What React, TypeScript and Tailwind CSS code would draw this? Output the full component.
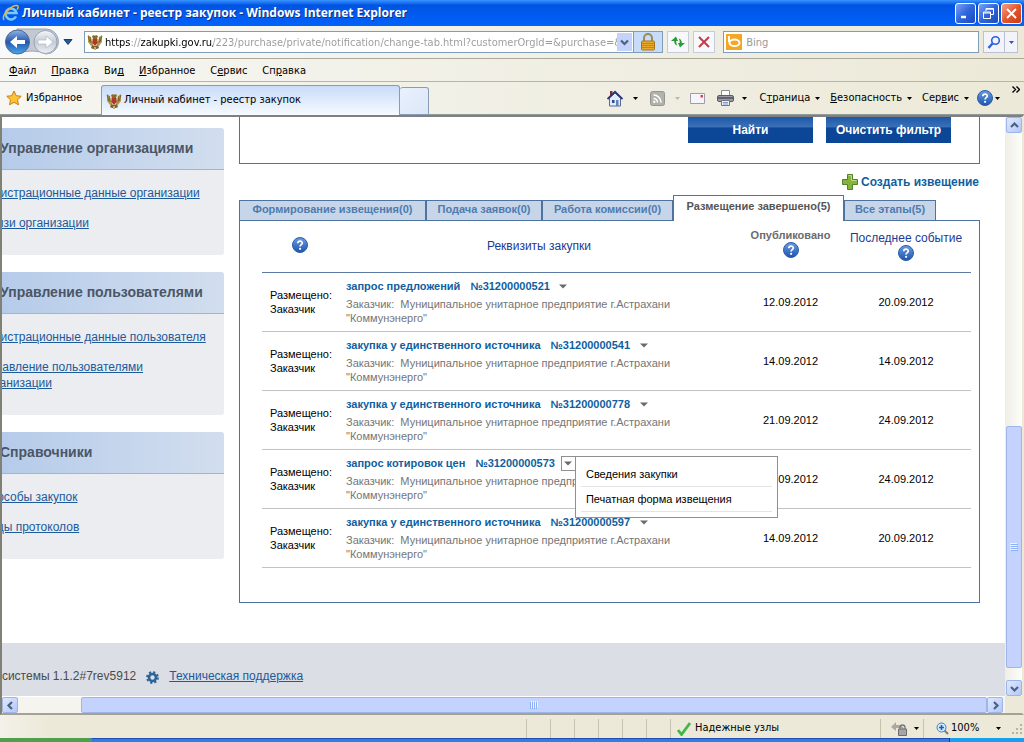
import React, { useState } from "react";
import clsx from "clsx";

const MENU = [
  ["", "Ф", "айл"],
  ["", "П", "равка"],
  ["Ви", "д", ""],
  ["", "И", "збранное"],
  ["С", "е", "рвис"],
  ["Сп", "р", "авка"],
];

const SIDEBAR = [
  {
    title: "Управление организациями",
    links: ["Регистрационные данные организации", "Связи организации"],
  },
  {
    title: "Управление пользователями",
    links: [
      "Регистрационные данные пользователя",
      "Управление пользователями организации",
    ],
  },
  { title: "Справочники", links: ["Способы закупок", "Виды протоколов"] },
];

const TABS = [
  { label: "Формирование извещения(0)", width: "w-[187px]" },
  { label: "Подача заявок(0)", width: "w-[116px]" },
  { label: "Работа комиссии(0)", width: "w-[131px]" },
  { label: "Размещение завершено(5)", width: "w-[171px]" },
  { label: "Все этапы(5)", width: "w-[92px]" },
];

const ROWS = [
  { kind: "запрос предложений", num: "№31200000521", published: "12.09.2012", last: "20.09.2012" },
  { kind: "закупка у единственного источника", num: "№31200000541", published: "14.09.2012", last: "14.09.2012" },
  { kind: "закупка у единственного источника", num: "№31200000778", published: "21.09.2012", last: "24.09.2012" },
  { kind: "запрос котировок цен", num: "№31200000573", published: "21.09.2012", last: "24.09.2012" },
  { kind: "закупка у единственного источника", num: "№31200000597", published: "14.09.2012", last: "20.09.2012" },
];

const Caret = ({ className = "" }) => (
  <svg width="5" height="3" viewBox="0 0 5 3" className={clsx("shrink-0", className)}>
    <path d="M0 0h5L2.5 3z" fill="currentColor" />
  </svg>
);

const Eagle = () => (
  <svg width="16" height="16" viewBox="0 0 16 16" className="shrink-0">
    <path d="M1 1l3 2 1 4 2 1-1 3-2 1-3-4zM15 1l-3 2-1 4-2 1 1 3 2 1 3-4z" fill="#b29a4c" />
    <path d="M1 2l2 6M3 3l1 6M15 2l-2 6M13 3l-1 6" stroke="#6c5a26" strokeWidth=".8" />
    <path d="M5 2l2-1 1 1 1-1 2 1-1 3H6z" fill="#8a6d23" />
    <path d="M5.500 5h5v4L8 12l-2.500-3z" fill="#b5352a" />
    <path d="M5 11l3 1 3-1 1 3-2 1H6l-2-1z" fill="#7a6531" />
    <path d="M7 13h2v3H7z" fill="#c9b068" />
  </svg>
);

const HelpIcon = () => (
  <svg width="16" height="16" viewBox="0 0 16 16" className="block">
    <defs>
      <linearGradient id="help" x1="0" y1="0" x2="0" y2="1">
        <stop offset="0" stopColor="#6c9de0" />
        <stop offset="1" stopColor="#1c54b0" />
      </linearGradient>
    </defs>
    <circle cx="8" cy="8" r="7.500" fill="url(#help)" stroke="#2a5da8" />
    <path d="M5.800 6.300C5.800 3.400 10.400 3.500 10.300 6.100 10.200 7.700 8.100 7.700 8.100 9.500" fill="none" stroke="#fff" strokeWidth="1.700" />
    <circle cx="8.100" cy="11.800" r="1.100" fill="#fff" />
  </svg>
);

const Chevron = ({ d }: { d: string }) => (
  <svg width="9" height="9" viewBox="0 0 9 9">
    <path d={d} fill="none" stroke="#4d6185" strokeWidth="2.200" />
  </svg>
);

const ScrollButton = ({ label, d }: { label: string; d: string }) => (
  <button
    aria-label={label}
    className="flex size-4 shrink-0 items-center justify-center rounded-xs border border-[#9fb5e8] bg-linear-to-br from-[#dfe8ff] to-[#b3c8f8]"
  >
    <Chevron d={d} />
  </button>
);

const WindowButton = ({ label, close, children }: { label: string; close?: boolean; children: React.ReactNode }) => (
  <button
    aria-label={label}
    className={clsx(
      "flex size-[21px] items-center justify-center rounded-[3px] border border-white",
      close
        ? "bg-linear-to-br from-[#f0a088] via-[#e2552d] to-[#c83c14]"
        : "bg-linear-to-br from-[#7ba2f5] via-[#2f65dc] to-[#1c49c0]"
    )}
  >
    <svg width="15" height="15" viewBox="0 0 15 15" fill="none" stroke="#fff">
      {children}
    </svg>
  </button>
);

const TitleBar = () => (
  <div className="flex h-[26px] shrink-0 items-center bg-linear-to-b from-[#3a93ff] via-[#0054e3] via-20% to-[#0262fb] pr-0.5 pl-0.5">
    <svg width="18" height="18" viewBox="0 0 18 18" fill="none" className="shrink-0">
      <path d="M14 12.500A5.500 5.500 0 1 1 14.500 9H5" stroke="#7cc8fa" strokeWidth="2.600" />
      <path d="M2 16C-1 12 9 1 15 1.500c2 .5 1 3 0 4" stroke="#e8b53c" strokeWidth="1.500" />
    </svg>
    <h1 className="ml-0.5 flex-1 font-['Open_Sans','Noto_Sans',sans-serif] text-[12px] font-bold whitespace-nowrap text-white [text-shadow:1px_1px_#0f2f8a]">
      Личный кабинет - реестр закупок - Windows Internet Explorer
    </h1>
    <div className="flex gap-0.5">
      <WindowButton label="Свернуть">
        <path d="M3 11h5" strokeWidth="2.500" />
      </WindowButton>
      <WindowButton label="Восстановить">
        <path d="M5 5V2.500h7.500v6H10M2.500 6h7v6.500h-7zM2.500 7h7M5 3.200h7.500" />
      </WindowButton>
      <WindowButton label="Закрыть" close>
        <path d="M3 3l9 9M12 3l-9 9" strokeWidth="2" />
      </WindowButton>
    </div>
  </div>
);

const NavBar = () => (
  <div className="flex h-[33px] shrink-0 items-center border-b border-[#aca899] bg-linear-to-r from-[#f8f9fa] to-[#ece9d8] pr-1.5 pl-1">
    <svg width="56" height="28" viewBox="0 0 56 28" className="shrink-0">
      <defs>
        <linearGradient id="back" x1="0" y1="0" x2="0" y2="1">
          <stop offset="0" stopColor="#8fb4e4" />
          <stop offset=".5" stopColor="#2358b0" />
          <stop offset="1" stopColor="#4aa6ea" />
        </linearGradient>
        <linearGradient id="fwd" x1="0" y1="0" x2="0" y2="1">
          <stop offset="0" stopColor="#f5f7fa" />
          <stop offset=".5" stopColor="#c4cbd5" />
          <stop offset="1" stopColor="#eef1f5" />
        </linearGradient>
      </defs>
      <path d="M13 1h29a12 12 0 0 1 0 25q-6-3-14-3t-15 3z" fill="#c2c9d3" stroke="#9aa5b5" />
      <circle cx="13.500" cy="14" r="12" fill="url(#back)" stroke="#50698f" />
      <circle cx="41.500" cy="14" r="11.500" fill="url(#fwd)" stroke="#98a3b3" />
      <path d="M6 14l7-6v4h8v4h-8v4z" fill="#fff" />
      <path d="M49 14l-7-6v4h-8v4h8v4z" fill="#fff" stroke="#b3bac5" strokeWidth=".7" />
    </svg>
    <button aria-label="Последние страницы" className="ml-0.5 p-px text-[#1f5d96]">
      <svg width="10" height="6" viewBox="0 0 10 6">
        <path d="M1 .5h8L5 5.500z" fill="currentColor" stroke="#173f6a" />
      </svg>
    </button>
    <div className="ml-2.5 flex h-[22px] min-w-0 flex-[580] items-center border border-[#7f9db9] bg-white pl-0.5">
      <Eagle />
      <input
        aria-label="Адрес"
        readOnly
        className="ml-0.5 min-w-0 flex-1 bg-[linear-gradient(90deg,#000_26px,#999_26px,#999_36px,#000_36px,#000_108px,#999_108px)] bg-clip-text pt-0.5 text-transparent outline-none"
        value="https://zakupki.gov.ru/223/purchase/private/notification/change-tab.html?customerOrgId=&purchase=&"
      />
      <button aria-label="Показать адреса" className="mr-px flex h-[18px] w-[15px] items-center justify-center bg-[#c3d3fb]">
        <Chevron d="M1 2.500l3.500 3.500 3.500-3.500" />
      </button>
      <button aria-label="Отчет о безопасности" className="flex h-5 w-[29px] items-center justify-center border-l border-[#7f9db9] bg-[#c6dcf8]">
        <svg width="16" height="18" viewBox="0 0 16 18">
          <path d="M4 9V5a4 4 0 0 1 8 0v4" fill="none" stroke="#9b8a5b" strokeWidth="2" />
          <rect x="1.500" y="8" width="13" height="9" rx="1" fill="#e8a92c" stroke="#a9751c" />
          <path d="M2 10.500h12M2 12.500h12M2 14.500h12" stroke="#c58518" />
        </svg>
      </button>
    </div>
    <button aria-label="Обновить" className="ml-1 flex h-[22px] w-[22px] items-center justify-center border border-[#c5ccda] bg-[#f7f8fb]">
      <svg width="16" height="16" viewBox="0 0 16 16" fill="#2d9a36">
        <path d="M6 2.500L1 7h3.200c0 2.500 1 4 3.300 4.500C6.300 10 6.200 8.800 6.300 7H8zM10 13.500L15 9h-3.200c0-2.500-1-4-3.300-4.500C9.700 6 9.800 7.200 9.700 9H8z" />
      </svg>
    </button>
    <button aria-label="Остановить" className="ml-1 flex h-[22px] w-[22px] items-center justify-center border border-[#c5ccda] bg-[#f7f8fb]">
      <svg width="14" height="14" viewBox="0 0 14 14">
        <path d="M2 2l10 10M12 2L2 12" stroke="#c33c46" strokeWidth="2" />
      </svg>
    </button>
    <div className="ml-2 flex h-[22px] min-w-0 flex-[254] items-center border border-[#7f9db9] bg-white pl-0.5">
      <svg width="16" height="16" viewBox="0 0 16 16" className="shrink-0">
        <path d="M0 0h16v16H0z" fill="#f5a623" />
        <path d="M3 2v6" stroke="#fff" strokeWidth="2" />
        <ellipse cx="8.500" cy="8.800" rx="5" ry="3.300" fill="none" stroke="#fff" strokeWidth="2" />
      </svg>
      <input aria-label="Поиск" placeholder="Bing" className="ml-1 min-w-0 flex-1 pt-0.5 outline-none placeholder:text-[#999]" />
    </div>
    <div className="ml-1 flex h-[22px] border border-[#b9c2d4] bg-[#f2f4fa]">
      <button aria-label="Найти в Bing" className="flex w-[21px] items-center justify-center border-r border-[#b9c2d4]">
        <svg width="14" height="14" viewBox="0 0 14 14" fill="none" stroke="#2b62d9">
          <circle cx="8.500" cy="5.500" r="3.800" strokeWidth="1.600" />
          <path d="M5.500 8.500L1.500 13" strokeWidth="2.400" />
        </svg>
      </button>
      <button aria-label="Параметры поиска" className="flex w-3 items-center justify-center text-[#2b55b9]">
        <Caret />
      </button>
    </div>
  </div>
);

const MenuBar = () => (
  <nav className="flex h-[23px] shrink-0 items-center gap-[15px] border-b border-[#b8b5a3] bg-linear-to-r from-[#f6f6f2] to-[#ece9d8] px-[9px] pt-[3px]">
    {MENU.map(([before, key, after]) => (
      <button key={before + key + after}>
        {before}
        <u>{key}</u>
        {after}
      </button>
    ))}
  </nav>
);

const CommandBar = () => (
  <div className="flex h-[33px] shrink-0 bg-linear-to-r from-[#f6f6f2] to-[#ece9d8]">
    <button className="flex w-[101px] items-center gap-1 border-b border-[#919b9c] pl-1.5">
      <svg width="16" height="16" viewBox="0 0 16 16">
        <path d="M8 1l2.200 4.700 5 .6-3.700 3.500 1 5L8 12.300l-4.500 2.500 1-5L.8 6.300l5-.6z" fill="#fcc436" stroke="#c77f18" />
      </svg>
      Избранное
    </button>
    <div className="mt-[3px] flex w-[299px] items-center rounded-t-[3px] border border-b-0 border-[#8a9bb5] bg-linear-to-b from-[#c8dcf8] to-[#f7faff] pl-1">
      <Eagle />
      <span className="ml-0.5 whitespace-nowrap">Личный кабинет - реестр закупок</span>
    </div>
    <button aria-label="Новая вкладка" className="mt-[5px] w-[29px] rounded-t-[3px] border border-l-0 border-[#8a9bb5] bg-linear-to-br from-[#e9f1fd] to-[#dbe7f8]" />
    <div className="flex flex-1 items-center justify-end border-b border-[#919b9c] pr-1 whitespace-nowrap">
      <button aria-label="Домой">
        <svg width="16" height="17" viewBox="0 0 16 17">
          <path d="M3 1h2.500v5H3z" fill="#8a2a2a" />
          <path d="M2.500 8L8 3l5.500 5v8h-11z" fill="#e4edfb" stroke="#5b6b8f" />
          <path d="M.5 9L8 1.800 15.500 9" fill="none" stroke="#27357e" strokeWidth="1.800" />
          <path d="M5 10h2.500v3H5z" fill="#2c4a9c" />
          <path d="M9 10h2.500v6H9z" fill="#5d83c5" />
        </svg>
      </button>
      <Caret className="ml-2.5" />
      <button aria-label="Веб-каналы" className="ml-3">
        <svg width="15" height="15" viewBox="0 0 15 15" fill="none">
          <rect x=".5" y=".5" width="14" height="14" rx="2" fill="#b2b2ac" stroke="#95958f" />
          <path d="M3.500 7.500a4 4 0 0 1 4 4M3.500 4a7.500 7.500 0 0 1 7.500 7.500" stroke="#fff" strokeWidth="1.600" />
          <circle cx="4.300" cy="10.800" r="1.200" fill="#fff" />
        </svg>
      </button>
      <Caret className="ml-2.5 text-[#bbb8a8]" />
      <button aria-label="Прочитать почту" className="ml-2.5">
        <svg width="15" height="11" viewBox="0 0 15 11">
          <path d="M.5.500h14v10H.5z" fill="#f5f5fa" stroke="#9c9cae" />
          <path d="M10.500 2h2.500v2.500h-2.500z" fill="#d0455a" />
        </svg>
      </button>
      <button aria-label="Печать" className="ml-3">
        <svg width="17" height="16" viewBox="0 0 17 16">
          <path d="M4.500.5h8v6h-8z" fill="#fff" stroke="#8b8b95" />
          <rect x=".5" y="5.500" width="16" height="6" rx="1.500" fill="#9b9ba5" stroke="#5d5d68" />
          <path d="M1 8h15" stroke="#4f4f5c" strokeWidth="1.500" />
          <path d="M4.500 10.500h8v5h-8z" fill="#e9f0fa" stroke="#76767f" />
          <path d="M6 12.500h5M6 14h5" stroke="#6b8cc4" strokeWidth=".8" />
        </svg>
      </button>
      <Caret className="ml-2" />
      <button className="ml-3 flex items-center gap-[5px]">
        <span>С<u>т</u>раница</span>
        <Caret />
      </button>
      <button className="ml-2.5 flex items-center gap-[5px]">
        <span><u>Б</u>езопасность</span>
        <Caret />
      </button>
      <button className="ml-2.5 flex items-center gap-[5px]">
        <span>Сер<u>в</u>ис</span>
        <Caret />
      </button>
      <button aria-label="Справка" className="ml-2 flex items-center gap-0.5">
        <HelpIcon />
        <Caret />
      </button>
      <button aria-label="Дополнительно" className="ml-3 self-start pt-1">
        <svg width="8" height="7" viewBox="0 0 8 7" fill="none" stroke="#000" strokeWidth="1.400">
          <path d="M.5.500l3 3-3 3M4.500.500l3 3-3 3" />
        </svg>
      </button>
    </div>
  </div>
);

const Sidebar = () => (
  <aside className="flex w-[222px] shrink-0 flex-col gap-[17px] overflow-hidden pt-[11px]">
    {SIDEBAR.map(({ title, links }) => (
      <section key={title} className="rounded-r-[3px] bg-[#ebedf0]">
        <h2 className="-ml-1 flex h-[42px] items-center rounded-tr-[3px] border-b border-[#9fb5d6] bg-linear-to-r from-[#b5cbea] to-[#d2deee] pl-0.5 text-[14px] font-bold whitespace-nowrap text-[#4b5666]">
          {title}
        </h2>
        <ul className="-ml-5 flex flex-col gap-3.5 pt-[15px] pb-6 text-[12px] leading-4">
          {links.map((link) => (
            <li key={link} className="w-[234px]">
              <a href="#" className="text-[#1c5a9c] underline">
                {link}
              </a>
            </li>
          ))}
        </ul>
      </section>
    ))}
  </aside>
);

const RowMenu = () => (
  <ul className="absolute top-0 left-3.5 z-10 w-[203px] border border-[#909090] bg-white p-[5px] text-[11px] font-normal text-black">
    {["Сведения закупки", "Печатная форма извещения"].map((item) => (
      <li key={item} className="border-b border-[#e4e4e4]">
        <a href="#" className="block px-[5px] py-1 leading-4 whitespace-nowrap">
          {item}
        </a>
      </li>
    ))}
  </ul>
);

const PurchaseTable = () => {
  const [open, setOpen] = useState<number | null>(3);

  return (
    <table className="w-full table-fixed border-collapse text-[11px]">
      <colgroup>
        <col className="w-[76px]" />
        <col />
        <col className="w-[101px]" />
        <col className="w-[130px]" />
      </colgroup>
      <thead>
        <tr className="h-[51px] border-b border-[#5c7ba3] text-[12px] text-[#1c3a94]">
          <th className="pb-0.5">
            <button aria-label="Подсказка" className="block pl-[30px]">
              <HelpIcon />
            </button>
          </th>
          <th className="font-normal">Реквизиты закупки</th>
          <th className="pb-1.5 text-[11px] leading-[14px] text-[#6b6b6b]">
            Опубликовано
            <button aria-label="Подсказка: опубликовано" className="mx-auto block">
              <HelpIcon />
            </button>
          </th>
          <th className="leading-[14px] font-normal">
            Последнее событие
            <button aria-label="Подсказка: последнее событие" className="mx-auto block">
              <HelpIcon />
            </button>
          </th>
        </tr>
      </thead>
      <tbody>
        {ROWS.map((row, i) => (
          <tr key={row.num} className="h-[59px] border-b border-[#c3c3c3]">
            <td className="pl-2 leading-[14px]">
              Размещено:
              <br />
              Заказчик
            </td>
            <td className="pt-1.5 pl-2 align-top">
              <div className="flex h-[15px] items-center font-bold whitespace-nowrap text-[#0f5f9f]">
                <a href="#">{row.kind}</a>
                <a href="#" className="ml-2.5">
                  {row.num}
                </a>
                <div className="relative ml-1.5">
                  <button
                    aria-label="Действия"
                    onClick={() => setOpen(open === i ? null : i)}
                    className={clsx(
                      "flex size-[15px] items-center justify-center border text-[#6b6b6b]",
                      open === i ? "border-[#909090]" : "border-transparent"
                    )}
                  >
                    <svg width="8" height="5" viewBox="0 0 8 5">
                      <path d="M0 .5h8L4 4.500z" fill="currentColor" />
                    </svg>
                  </button>
                  {open === i && <RowMenu />}
                </div>
              </div>
              <p className="mt-[3px] w-[340px] leading-[14px] text-[#757575]">
                Заказчик:&nbsp; Муниципальное унитарное предприятие г.Астрахани
                "Коммунэнерго"
              </p>
            </td>
            <td className="pt-0.5 text-center">{row.published}</td>
            <td className="pt-0.5 text-center">{row.last}</td>
          </tr>
        ))}
      </tbody>
    </table>
  );
};

const Content = () => {
  const [active, setActive] = useState(3);

  return (
    <main className="mr-[25px] ml-[15px] min-w-0 flex-1">
      <div className="flex h-[47px] items-start justify-end gap-[13px] border border-t-0 border-[#4f73a0] pr-7">
        {["Найти", "Очистить фильтр"].map((label) => (
          <button
            key={label}
            className="h-[26px] w-[125px] bg-linear-to-b from-[#1d59a8] from-0% via-[#3a70b8] via-38% to-[#0c4696] to-42% text-[12px] font-bold text-white"
          >
            {label}
          </button>
        ))}
      </div>
      <div className="flex h-[31px] items-end justify-end pr-px pb-[5px]">
        <a href="#" className="flex items-center gap-[3px] text-[12px] leading-4 font-bold text-[#0f5f9f]">
          <svg width="16" height="16" viewBox="0 0 16 16">
            <path d="M5.500.500h5v5h5v5h-5v5h-5v-5h-5v-5h5z" fill="#86b33b" stroke="#55802a" />
            <path d="M6.500 1.500h3v5h5" fill="none" stroke="#bedb85" />
          </svg>
          Создать извещение
        </a>
      </div>
      <div className="flex items-end" role="tablist">
        {TABS.map(({ label, width }, i) => (
          <button
            key={label}
            role="tab"
            aria-selected={active === i}
            onClick={() => setActive(i)}
            className={clsx(
              "flex justify-center border border-b-0 border-[#4f73a0] text-[11px] leading-4 font-bold whitespace-nowrap",
              width,
              active === i
                ? "relative -mb-px h-[26px] bg-white pt-0.5 text-[#555]"
                : "h-5 bg-[#c6d5e8] text-[#4f7bb0]"
            )}
          >
            {label}
          </button>
        ))}
      </div>
      <div className="border border-[#4f73a0] pr-2 pb-[34px] pl-[22px]">
        <PurchaseTable />
      </div>
    </main>
  );
};

const Grip = ({ vertical }: { vertical?: boolean }) => (
  <svg width="8" height="8" viewBox="0 0 8 8" className={vertical ? "" : "rotate-90"}>
    <path d="M0 .5h7M0 2.500h7M0 4.500h7M0 6.500h7" stroke="#eef4fe" />
    <path d="M1 1.500h7M1 3.500h7M1 5.500h7M1 7.500h7" stroke="#8cb0f8" />
  </svg>
);

const StatusBar = () => (
  <footer className="flex h-[23px] shrink-0 items-stretch justify-end bg-linear-to-r from-[#f3f1e9] to-[#ece9d8] to-5% pt-1">
    {[0, 1, 2, 3, 4, 5].map((n) => (
      <div key={n} className="w-6 border-l border-[#c5c2b0]" />
    ))}
    <div className="flex w-[210px] items-center gap-1 border-l border-[#c5c2b0] pl-1.5">
      <svg width="14" height="14" viewBox="0 0 14 14">
        <path d="M1 8l3.500 4.500L13 1" fill="none" stroke="#43b649" strokeWidth="2.800" />
      </svg>
      Надежные узлы
    </div>
    <button aria-label="Защищенный режим" className="flex w-[43px] items-center gap-1.5 border-l border-[#c5c2b0] pl-2.5">
      <svg width="17" height="15" viewBox="0 0 17 15">
        <path d="M0 6l5-5v3c6 0 8 2 8 5-2-2-4-2-8-2v3z" fill="#a9a9a5" />
        <path d="M9 8V6.500a2.500 2.500 0 0 1 5 0V8" fill="none" stroke="#77777a" strokeWidth="1.300" />
        <path d="M7.500 8h8v6.500h-8z" fill="#a5a5a8" stroke="#6d6d70" />
      </svg>
      <Caret />
    </button>
    <button className="flex w-[101px] items-center border-l border-[#c5c2b0] pl-3">
      <svg width="13" height="13" viewBox="0 0 13 13">
        <path d="M8 8l4 4" stroke="#8a7a68" strokeWidth="2" />
        <circle cx="5.500" cy="5.500" r="4.500" fill="#d5e8fb" stroke="#3f7fc6" />
        <path d="M5.500 3v5M3 5.500h5" stroke="#1c5fb8" strokeWidth="1.600" />
      </svg>
      <span className="ml-0.5 flex-1 text-left">100%</span>
      <Caret className="mr-2.5" />
      <svg width="13" height="13" viewBox="0 0 13 13" className="mt-1" fill="#b8b4a2">
        <path d="M9 0h2v2H9zM9 4h2v2H9zM9 8h2v2H9zM5 4h2v2H5zM5 8h2v2H5zM1 8h2v2H1z" />
      </svg>
    </button>
  </footer>
);

const App = () => (
  <div className="flex h-screen flex-col overflow-hidden bg-[#ece9d8] font-['DejaVu_Sans_Condensed','Noto_Sans',sans-serif] text-[11px] text-black">
    <TitleBar />
    <NavBar />
    <MenuBar />
    <CommandBar />
    <div className="flex min-h-0 flex-1 border-2 border-t-[#808080] border-r-[#ece9d8] border-b-[#a5a294] border-l-[#808075] bg-white">
      <div className="flex min-w-0 flex-1 flex-col">
        <div className="flex min-h-0 flex-1 flex-col overflow-hidden font-['Liberation_Sans',Arial,sans-serif]">
          <div className="flex min-h-0 flex-1">
            <Sidebar />
            <Content />
          </div>
          <div className="flex h-[53px] shrink-0 items-center bg-[#dbdee5] pt-3 text-[12px] text-[#4b4b4b]">
            <span className="-ml-11 whitespace-nowrap">Версия системы 1.1.2#7rev5912</span>
            <svg width="13" height="13" viewBox="0 0 13 13" fill="none" className="mt-1 ml-2.5">
              <circle cx="6.500" cy="6.500" r="3.500" stroke="#2a6496" strokeWidth="2.600" />
              <circle cx="6.500" cy="6.500" r="5.500" stroke="#2a6496" strokeWidth="1.800" strokeDasharray="2.200 2.120" />
            </svg>
            <a href="#" className="ml-2.5 text-[#1c5a9c] underline">
              Техническая поддержка
            </a>
          </div>
        </div>
        <div className="flex h-[17px] shrink-0 border-t border-white bg-[#f5f4ee] pr-0.5">
          <ScrollButton label="Прокрутить влево" d="M6 1L2.500 4.500 6 8" />
          <div className="ml-[63px] flex flex-1 items-center justify-center rounded-xs border border-[#9fb5e8] bg-[#c3d3fd]">
            <Grip />
          </div>
          <ScrollButton label="Прокрутить вправо" d="M3 1l3.500 3.500L3 8" />
        </div>
      </div>
      <div className="flex w-[17px] shrink-0 flex-col items-center bg-[#ece9d8]">
        <div className="flex w-full flex-1 flex-col items-end bg-linear-to-r from-[#efeee6] to-[#fdfdfa]">
          <ScrollButton label="Прокрутить вверх" d="M1 6l3.500-3.500L8 6" />
          <div className="flex-[294]" />
          <div className="flex w-4 flex-[241] items-center justify-center rounded-xs border border-[#9fb5e8] bg-[#c3d3fd]">
            <Grip vertical />
          </div>
          <div className="flex-[12]" />
          <ScrollButton label="Прокрутить вниз" d="M1 3l3.500 3.500L8 3" />
        </div>
        <div className="h-[17px]" />
      </div>
    </div>
    <StatusBar />
    <div className="flex h-1 shrink-0 bg-[#2f7de8]">
      <div className="w-[92px] rounded-tr-sm bg-[#4fa04c]" />
      <div className="flex-1 border-t border-[#1d4fae]" />
      <div className="w-[75px] border-l border-[#0b3a8c] bg-[#18a0ee]" />
    </div>
  </div>
);

export default App;
